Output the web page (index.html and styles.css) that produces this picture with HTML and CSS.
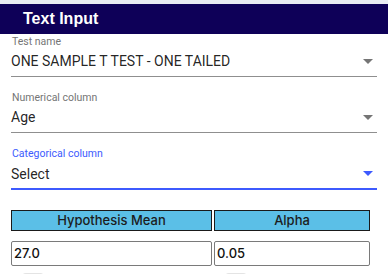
FILE: index.html
```html
<!DOCTYPE html>
<html>
<head>
<meta charset="utf-8">
<link rel="stylesheet" href="styles.css">
</head>
<body>
<div class="topstrip"></div>
<div class="header">Text Input</div>
<div class="form">
  <div class="field">
    <div class="label">Test name</div>
    <div class="select">
      <span class="value">ONE SAMPLE T TEST - ONE TAILED</span>
      <svg class="arrow" width="10" height="5" viewBox="0 0 10 5"><path d="M0 0h10L5 5z" fill="#757575"/></svg>
    </div>
  </div>
  <div class="field">
    <div class="label">Numerical column</div>
    <div class="select">
      <span class="value">Age</span>
      <svg class="arrow" width="10" height="5" viewBox="0 0 10 5"><path d="M0 0h10L5 5z" fill="#757575"/></svg>
    </div>
  </div>
  <div class="field focused">
    <div class="label">Categorical column</div>
    <div class="select">
      <span class="value">Select</span>
      <svg class="arrow" width="10" height="5" viewBox="0 0 10 5"><path d="M0 0h10L5 5z" fill="#3d5afe"/></svg>
    </div>
  </div>
</div>
<div class="params">
  <div class="phead">Hypothesis Mean</div>
  <div class="phead">Alpha</div>
  <div class="pinput">27.0</div>
  <div class="pinput">0.05</div>
  <div class="pcell"><span class="bump"></span></div>
  <div class="pcell"><span class="bump"></span></div>
</div>
</body>
</html>
```
FILE: styles.css
```css
html, body {
  margin: 0;
  padding: 0;
  background: #ffffff;
  overflow: hidden;
}
body {
  width: 388px;
  height: 274px;
  font-family: Roboto, "Liberation Sans", sans-serif;
}
.topstrip {
  height: 4px;
  background: #e9ecf3;
}
.header {
  height: 30px;
  background: #0e0058;
  color: #ffffff;
  font-family: "Liberation Sans", Arial, sans-serif;
  font-weight: bold;
  font-size: 16px;
  line-height: 30px;
  padding-left: 23px;
}
.form {
  display: flex;
  flex-direction: column;
  gap: 15px;
  padding: 2px 11px 0 11px;
}
.field {
  width: 366px;
}
.label {
  font-size: 10.5px;
  line-height: 12px;
  color: #757575;
  padding-left: 1px;
}
.select {
  display: flex;
  align-items: center;
  margin-top: 5px;
  height: 23px;
  border-bottom: 1px solid #8f8f8f;
  font-size: 14px;
  color: rgba(0, 0, 0, 0.87);
}
.value {
  flex: 1;
  line-height: 17px;
  align-self: flex-start;
}
.arrow {
  margin-right: 4px;
  margin-top: -6px;
}
.focused .label {
  color: #3d5afe;
}
.focused .select {
  height: 23px;
  border-bottom: 2px solid #3d5afe;
}
.focused .value {
  padding-top: 1px;
}
.params {
  display: grid;
  grid-template-columns: 201px 156px;
  column-gap: 2px;
  row-gap: 10px;
  margin: 20px 0 0 11px;
  font-family: Inter, "Open Sans", sans-serif;
  font-weight: 500;
}
.phead {
  height: 19px;
  background: #5bbfe7;
  border: 1px solid #1a1a1a;
  font-size: 13px;
  line-height: 19px;
  text-align: center;
  color: #1c1c1c;
}
.pinput {
  height: 23px;
  border: 1px solid #7a7a7a;
  border-radius: 2px;
  font-size: 13px;
  line-height: 23px;
  padding-left: 2px;
  color: #111111;
}
.pcell {
  margin-top: -3px;
  padding-left: 11px;
}
.bump {
  display: block;
  width: 22px;
  height: 14px;
  border-radius: 4px;
  background: #e4e4e4;
}
```
